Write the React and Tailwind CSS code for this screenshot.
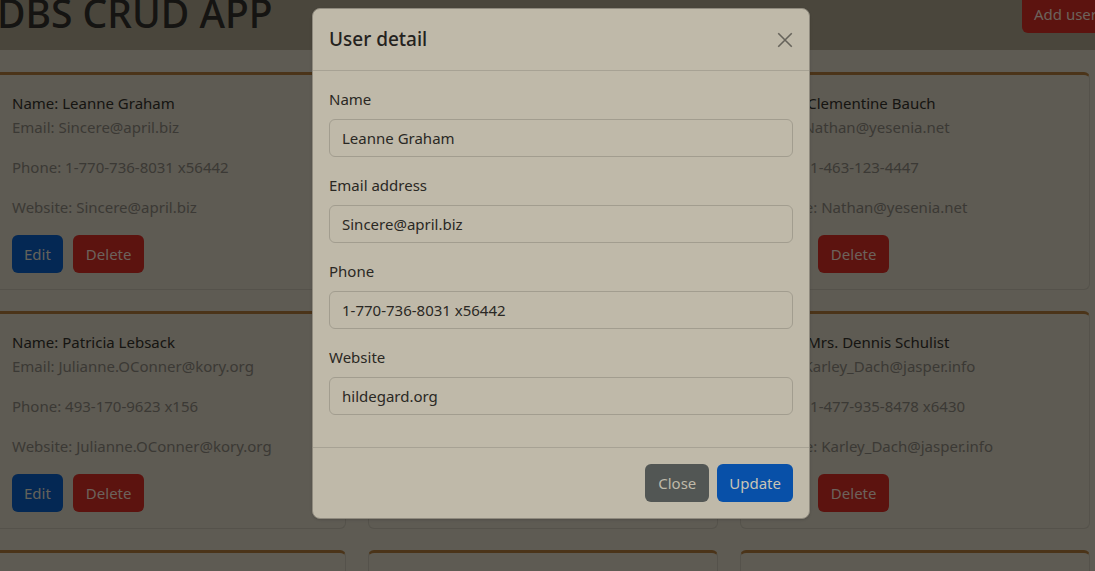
import React from "react";

const users = [
  { name: "Leanne Graham", email: "Sincere@april.biz", phone: "1-770-736-8031 x56442" },
  { name: "Ervin Howell", email: "Shanna@melissa.tv", phone: "010-692-6593 x09125" },
  { name: "Clementine Bauch", email: "Nathan@yesenia.net", phone: "1-463-123-4447" },
  { name: "Patricia Lebsack", email: "Julianne.OConner@kory.org", phone: "493-170-9623 x156" },
  { name: "Chelsey Dietrich", email: "Lucio_Hettinger@annie.ca", phone: "(254)954-1289" },
  { name: "Mrs. Dennis Schulist", email: "Karley_Dach@jasper.info", phone: "1-477-935-8478 x6430" },
  { name: "Kurtis Weissnat", email: "Telly.Hoeger@billy.biz", phone: "210.067.6132" },
  { name: "Nicholas Runolfsdottir V", email: "Sherwood@rosamond.me", phone: "586.493.6943 x140" },
  { name: "Glenna Reichert", email: "Chaim_McDermott@dana.io", phone: "(775)976-6794 x41206" },
];

function Card({ u }) {
  return (
    <div className="rounded-md border border-[#aaa597] border-t-[3px] border-t-[#966832] p-4 text-[15px] leading-6">
      <p className="text-[#2c2a25]">Name: {u.name}</p>
      <p className="mb-4 text-[#77736a]">Email: {u.email}</p>
      <p className="mb-4 text-[#77736a]">Phone: {u.phone}</p>
      <p className="mb-4 text-[#77736a]">Website: {u.email}</p>
      <div className="flex gap-[10px]">
        <button className="h-[38px] rounded-md bg-[#0850a8] px-3 text-[#c9c4b5]">Edit</button>
        <button className="h-[38px] rounded-md bg-[#b8261e] px-[13px] text-[#d9c4b8]">Delete</button>
      </div>
    </div>
  );
}

function Field({ label, value }) {
  return (
    <div className="mb-4">
      <label className="mb-2 block leading-6 text-[#2a2824]">{label}</label>
      <div className="flex h-[38px] items-center rounded-md border border-[#a29d8f] px-3 text-[#2a2824]">
        {value}
      </div>
    </div>
  );
}

export default function App() {
  return (
    <div className="relative h-[571px] w-[1095px] overflow-hidden bg-[#bcb6a6] font-['Noto_Sans',sans-serif]">
      <header className="flex h-[50px] items-start overflow-hidden bg-[#948c78]">
        <h1 className="-ml-[3px] -mt-[11px] whitespace-nowrap text-[39px] font-medium leading-[48px] text-[#2a2824]">
          DBS CRUD APP
        </h1>
        <button className="ml-auto -mr-[14px] -mt-[5px] h-[38px] shrink-0 rounded-md bg-[#b8261e] px-3 text-[15px] text-[#d9c4b8]">
          Add user
        </button>
      </header>
      <main className="-ml-[5px] grid grid-cols-[351px_350px_350px] gap-x-[22px] gap-y-[21px] pt-[22px]">
        {users.map((u) => (
          <Card key={u.name} u={u} />
        ))}
      </main>

      <div className="absolute inset-0 bg-black/50" />

      <div className="absolute left-[312px] top-[8px] w-[498px] rounded-lg border border-[#8f8a7e] bg-[#bfb9a9] text-[15px] shadow-sm">
        <div className="flex h-[62px] items-center justify-between border-b border-[#a7a294] px-4">
          <h5 className="text-[19px] font-medium text-[#24221e]">User detail</h5>
          <svg width="18" height="18" viewBox="0 0 16 16" className="mr-[-1px] text-[#66635b]">
            <path d="M2 2 L14 14 M14 2 L2 14" stroke="currentColor" strokeWidth="1.4" fill="none" />
          </svg>
        </div>
        <div className="px-4 pb-4 pt-4">
          <Field label="Name" value="Leanne Graham" />
          <Field label="Email address" value="Sincere@april.biz" />
          <Field label="Phone" value="1-770-736-8031 x56442" />
          <Field label="Website" value="hildegard.org" />
        </div>
        <div className="flex justify-end gap-2 border-t border-[#a7a294] px-4 py-4">
          <button className="h-[38px] rounded-md bg-[#525654] px-[13px] text-[#bfb9a9]">Close</button>
          <button className="h-[38px] rounded-md bg-[#0850a8] px-3 text-[#c9c4b5]">Update</button>
        </div>
      </div>
    </div>
  );
}
